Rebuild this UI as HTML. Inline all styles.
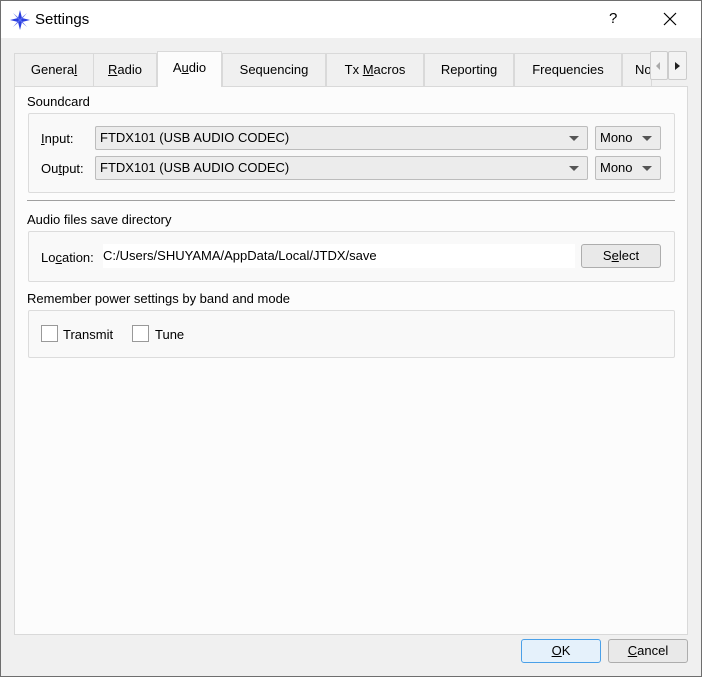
<!DOCTYPE html>
<html><head><meta charset="utf-8"><style>
*{box-sizing:border-box;margin:0;padding:0}
body{width:702px;height:677px;background:#f0f0f0;font-family:"Liberation Sans","Noto Sans CJK JP",sans-serif;font-size:13px;color:#000;position:relative;overflow:hidden}
.abs{position:absolute}
.frame{left:0;top:0;width:702px;height:677px;border:1px solid #6e6e6e;z-index:5;pointer-events:none}
.title{left:0;top:0;width:702px;height:38px;background:#fff}
.tab{top:53px;height:33px;background:#f0f0f0;border:1px solid #d9d9d9;border-bottom:none;text-align:center;line-height:31px;font-size:13px}
.sel{top:51px;height:36px;background:#fcfcfc;z-index:2;line-height:32px}
.pane{left:14px;top:86px;width:674px;height:549px;background:#fcfcfc;border:1px solid #d9d9d9}
.grp{border:1px solid #dcdcdc;background:#f9f9f9;border-radius:2px}
.combo{background:#ececec;border:1px solid #bcbcbc;border-radius:2px;height:24px;line-height:22px;padding-left:4px}
.arr{position:absolute;right:8px;top:9px;width:0;height:0;border-left:5px solid transparent;border-right:5px solid transparent;border-top:5px solid #555}
.btn{background:#e9e9e9;border:1px solid #adadad;border-radius:3px;text-align:center;line-height:22px;height:24px}
.cb{width:17px;height:17px;border:1px solid #999;background:#fff}
u{text-decoration:underline}
</style></head><body>
<div class="abs title"></div>
<svg class="abs" style="left:10px;top:10px" width="20" height="20" viewBox="0 0 20 20"><path d="M10 0 L12 8 L20 10 L12 12 L10 20 L8 12 L0 10 L8 8Z" fill="#2b3fe0"/><path d="M3 3 L10 9 L17 3 L11 10 L17 17 L10 11 L3 17 L9 10Z" fill="#5a6cf0"/></svg>
<div class="abs" style="left:35px;top:11px;font-size:15px">Settings</div>
<div class="abs" style="left:609px;top:10px;font-size:15px">?</div>
<svg class="abs" style="left:663px;top:12px" width="14" height="14"><path d="M1 1L13 13M13 1L1 13" stroke="#000" stroke-width="1.2"/></svg>
<div class="abs pane"></div>
<div class="abs tab" style="left:14px;width:80px">Genera<u>l</u></div>
<div class="abs tab" style="left:93px;width:64px"><u>R</u>adio</div>
<div class="abs tab sel" style="left:157px;width:65px">A<u>u</u>dio</div>
<div class="abs tab" style="left:222px;width:104px">Sequencing</div>
<div class="abs tab" style="left:326px;width:98px">Tx <u>M</u>acros</div>
<div class="abs tab" style="left:424px;width:90px">Reporting</div>
<div class="abs tab" style="left:514px;width:108px">Frequencies</div>
<div class="abs tab" style="left:622px;width:30px;text-align:left;padding-left:12px;overflow:hidden">No</div>
<div class="abs" style="left:650px;top:51px;width:18px;height:29px;background:#f3f3f3;border:1px solid #ccc;border-radius:2px;z-index:3"><div style="position:absolute;left:5px;top:10px;border-top:4px solid transparent;border-bottom:4px solid transparent;border-right:4px solid #aaa"></div></div>
<div class="abs" style="left:668px;top:51px;width:19px;height:29px;background:#f3f3f3;border:1px solid #ccc;border-radius:2px;z-index:3"><div style="position:absolute;left:6px;top:10px;border-top:4px solid transparent;border-bottom:4px solid transparent;border-left:5px solid #222"></div></div>

<div class="abs" style="left:27px;top:94px">Soundcard</div>
<div class="abs grp" style="left:28px;top:113px;width:647px;height:80px"></div>
<div class="abs" style="left:41px;top:131px"><u>I</u>nput:</div>
<div class="abs combo" style="left:95px;top:126px;width:493px">FTDX101 (USB AUDIO CODEC)<div class="arr"></div></div>
<div class="abs combo" style="left:595px;top:126px;width:66px">Mono<div class="arr"></div></div>
<div class="abs" style="left:41px;top:161px">Ou<u>t</u>put:</div>
<div class="abs combo" style="left:95px;top:156px;width:493px">FTDX101 (USB AUDIO CODEC)<div class="arr"></div></div>
<div class="abs combo" style="left:595px;top:156px;width:66px">Mono<div class="arr"></div></div>
<div class="abs" style="left:27px;top:200px;width:648px;height:1px;background:#a0a0a0"></div>
<div class="abs" style="left:27px;top:212px">Audio files save directory</div>
<div class="abs grp" style="left:28px;top:231px;width:647px;height:51px"></div>
<div class="abs" style="left:41px;top:250px">Lo<u>c</u>ation:</div>
<div class="abs" style="left:103px;top:244px;width:472px;height:24px;background:#fff;line-height:24px">C:/Users/SHUYAMA/AppData/Local/JTDX/save</div>
<div class="abs btn" style="left:581px;top:244px;width:80px">S<u>e</u>lect</div>
<div class="abs" style="left:27px;top:291px">Remember power settings by band and mode</div>
<div class="abs grp" style="left:28px;top:310px;width:647px;height:48px"></div>
<div class="abs cb" style="left:41px;top:325px"></div>
<div class="abs" style="left:63px;top:327px">Transmit</div>
<div class="abs cb" style="left:132px;top:325px"></div>
<div class="abs" style="left:155px;top:327px">Tune</div>
<div class="abs btn" style="left:521px;top:639px;width:80px;border-color:#4aa0e8;background:#e5f1fb"><u>O</u>K</div>
<div class="abs btn" style="left:608px;top:639px;width:80px"><u>C</u>ancel</div>
<div class="abs frame"></div>
</body></html>
